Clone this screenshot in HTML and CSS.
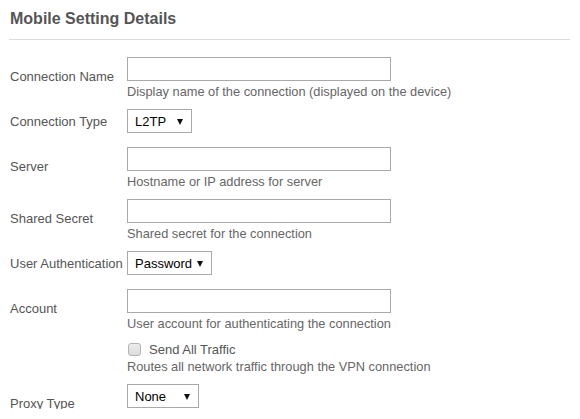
FILE: index.html
```html
<!DOCTYPE html>
<html>
<head>
<meta charset="utf-8">
<link rel="stylesheet" href="styles.css">
</head>
<body>
<div class="page">
  <h2 class="title">Mobile Setting Details</h2>
  <div class="form">
    <div class="row">
      <div class="label">Connection Name</div>
      <div class="ctl">
        <div class="input"></div>
        <div class="hint">Display name of the connection (displayed on the device)</div>
      </div>
    </div>
    <div class="row sel">
      <div class="label">Connection Type</div>
      <div class="ctl">
        <div class="select w65"><span>L2TP</span><i class="arrow"></i></div>
      </div>
    </div>
    <div class="row">
      <div class="label">Server</div>
      <div class="ctl">
        <div class="input"></div>
        <div class="hint">Hostname or IP address for server</div>
      </div>
    </div>
    <div class="row">
      <div class="label">Shared Secret</div>
      <div class="ctl">
        <div class="input"></div>
        <div class="hint">Shared secret for the connection</div>
      </div>
    </div>
    <div class="row sel">
      <div class="label">User Authentication</div>
      <div class="ctl">
        <div class="select w85"><span>Password</span><i class="arrow"></i></div>
      </div>
    </div>
    <div class="row">
      <div class="label">Account</div>
      <div class="ctl">
        <div class="input"></div>
        <div class="hint">User account for authenticating the connection</div>
      </div>
    </div>
    <div class="row">
      <div class="label"></div>
      <div class="ctl">
        <div class="check"><span class="box"></span><span>Send All Traffic</span></div>
        <div class="hint nomargin">Routes all network traffic through the VPN connection</div>
      </div>
    </div>
    <div class="row">
      <div class="label">Proxy Type</div>
      <div class="ctl">
        <div class="select w72"><span>None</span><i class="arrow"></i></div>
        <div class="spacer"></div>
      </div>
    </div>
  </div>
</div>
</body>
</html>
```
FILE: styles.css
```css
html, body {
  margin: 0;
  padding: 0;
  background: #fff;
}
body {
  font-family: "Liberation Sans", Arial, sans-serif;
  font-size: 13px;
  color: #555;
}
.page {
  height: 409px;
  overflow: hidden;
  padding: 0 10px 0 9px;
}
.title {
  margin: 0;
  padding: 9px 1px 11px;
  font-size: 16px;
  line-height: 19px;
  font-weight: bold;
  color: #555;
  border-bottom: 1px solid #dcdcdc;
}
.form {
  padding: 17px 0 0 1px;
}
.row {
  display: flex;
  align-items: center;
  margin-bottom: 9px;
}
.row.sel {
  padding-bottom: 5px;
}
.label {
  width: 117px;
  flex: none;
  line-height: 17px;
  padding-bottom: 4px;
  white-space: nowrap;
}
.row.sel .label {
  padding-bottom: 0;
}
.ctl {
  display: flex;
  flex-direction: column;
  align-items: flex-start;
}
.input {
  width: 262px;
  height: 22px;
  border: 1px solid #a9a9a9;
  background: #fff;
}
.hint {
  margin-top: 2px;
  line-height: 17px;
  font-size: 12.8px;
  color: #666;
  white-space: nowrap;
}
.hint.nomargin {
  margin-top: 0;
}
.spacer {
  height: 19px;
}
.select {
  box-sizing: border-box;
  height: 24px;
  border: 1px solid #a9a9a9;
  display: flex;
  align-items: center;
  justify-content: space-between;
  padding: 0 8px 0 7px;
  color: #000;
  background: #fff;
}
.w65 { width: 65px; }
.w85 { width: 85px; }
.w72 { width: 72px; }
.arrow {
  width: 0;
  height: 0;
  border-left: 3px solid transparent;
  border-right: 3px solid transparent;
  border-top: 6px solid #111;
  margin-top: 1px;
}
.check {
  display: flex;
  align-items: center;
  height: 17px;
  line-height: 17px;
}
.box {
  box-sizing: border-box;
  width: 13px;
  height: 13px;
  border: 1px solid #b4b4b4;
  border-radius: 3px;
  background: linear-gradient(#ececec, #dcdcdc);
  margin: 0 8px 0 1px;
}
```
